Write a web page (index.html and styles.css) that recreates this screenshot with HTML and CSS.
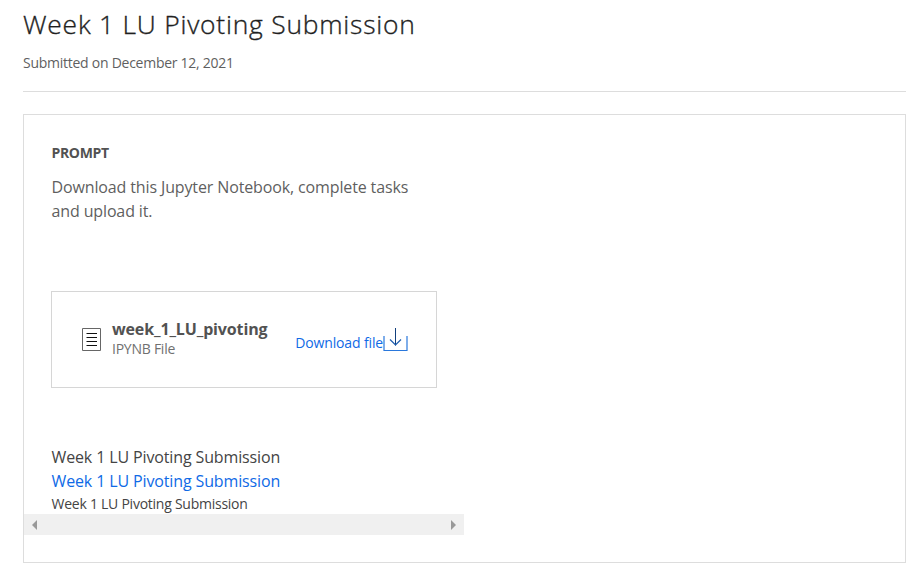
FILE: index.html
```html
<!DOCTYPE html>
<html lang="en">
<head>
<meta charset="utf-8">
<title>Week 1 LU Pivoting Submission</title>
<link rel="stylesheet" href="styles.css">
</head>
<body>
<header class="page-header">
  <h1>Week 1 LU Pivoting Submission</h1>
  <p class="date">Submitted on December 12, 2021</p>
</header>
<main class="panel">
  <h2>PROMPT</h2>
  <p class="prompt">Download this Jupyter Notebook, complete tasks and upload it.</p>
  <section class="file">
    <svg class="doc" width="20" height="24" viewBox="0 0 20 24" fill="none"><path stroke="#666" d="M.5.5h18v22H.5z"/><path stroke="#111" d="M4.5 5.5h10.5M4.5 9.5h10.5M4.5 13.5h10.5M4.5 17.5h10.5"/></svg>
    <div class="file-info">
      <div class="file-name">week_1_LU_pivoting</div>
      <div class="file-type">IPYNB File</div>
    </div>
    <a class="download">Download file<svg width="25" height="24" viewBox="0 0 25 24" fill="none"><path stroke="#2a78dc" stroke-width="1.2" d="M1 8v14.5h23V8"/><path stroke="#123f7d" d="M12.5 0v17.5"/><path stroke="#1c5cae" stroke-width="1.2" d="M7 11.5l5.5 5.5 5.5-5.5"/></svg></a>
  </section>
  <div class="submission">
    <div class="title">Week 1 LU Pivoting Submission</div>
    <a class="link">Week 1 LU Pivoting Submission</a>
    <div class="caption">Week 1 LU Pivoting Submission</div>
  </div>
  <div class="scrollbar"><span class="arrow left"></span><span class="arrow right"></span></div>
</main>
</body>
</html>
```

FILE: styles.css
```css
* { box-sizing: border-box; }
body { margin: 0; padding: 0 10px 0 23px; font-family: "Open Sans", sans-serif; color: #444; background: #fff; }
h1, h2, p { margin: 0; }
.page-header { height: 92px; padding-top: 6px; border-bottom: 1px solid #ddd; }
h1 { font-size: 26.4px; line-height: 37px; font-weight: 300; letter-spacing: 0.78px; color: #1f1f1f; -webkit-text-stroke: 0.35px #1f1f1f; }
.date { margin-top: 10px; font-size: 14px; line-height: 20px; letter-spacing: -0.26px; color: #5f5f5f; }
.panel { margin-top: 22px; height: 449px; padding-top: 28px; border: 1px solid #ddd; }
h2 { margin-left: 27.5px; font-size: 14px; line-height: 20px; letter-spacing: -0.35px; color: #525252; }
.prompt { width: 386px; margin: 12px 0 0 27.5px; font-size: 16px; line-height: 24px; letter-spacing: -0.13px; color: #5f5f5f; }
.file { display: flex; width: 386px; height: 97px; margin: 68px 0 0 27px; padding: 27px 28px 0 30px; border: 1px solid #d6d6d6; }
.doc { margin: 9px 10px 0 0; }
.file-name { font-size: 16px; font-weight: 700; line-height: 20px; letter-spacing: -0.14px; color: #525252; }
.file-type { font-size: 14px; line-height: 20px; letter-spacing: -0.25px; color: #707070; }
.download { display: flex; margin: 9px 0 0 auto; font-size: 14px; line-height: 29px; letter-spacing: -0.14px; color: #0f6ae6; }
.submission { margin: 57px 0 0 27.5px; font-size: 16px; line-height: 24px; letter-spacing: -0.13px; }
.link { display: block; color: #0f6ae6; }
.caption { font-size: 14px; line-height: 21px; letter-spacing: -0.25px; }
.scrollbar { display: flex; justify-content: space-between; align-items: center; width: 440px; height: 21px; padding: 0 8px; background: #f0f0f0; }
.arrow { border: 5px solid transparent; }
.left { border-left: 0; border-right-color: #999; }
.right { border-right: 0; border-left-color: #999; }
```
